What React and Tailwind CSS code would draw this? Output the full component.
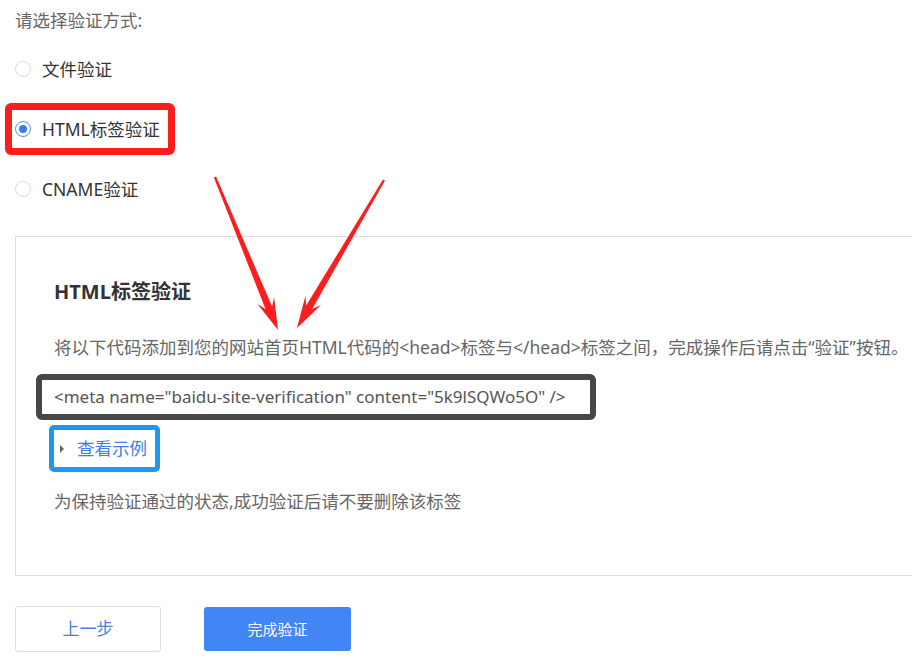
import React from 'react';

const Radio = ({ checked }) => (
  <span
    className={`w-4 h-4 rounded-full border flex items-center justify-center shrink-0 ${
      checked ? 'border-[#5b8ef0]' : 'border-[#dcdcdc]'
    }`}
  >
    {checked && <span className="w-2 h-2 rounded-full bg-[#3d7cf0]" />}
  </span>
);

const Arrows = () => (
  <svg className="absolute inset-0 pointer-events-none" width="912" height="659" viewBox="0 0 912 659">
    <polygon
      fill="#fa1e1e"
      points="213.9,177.5 265.6,309.2 257.5,303.9 278,330 274.1,297 272.1,306.5 216.1,176.5"
    />
    <polygon
      fill="#fa1e1e"
      points="385,180.6 312.2,309.1 321,305 297,328 305.4,295.9 306.2,305.5 383,179.4"
    />
  </svg>
);

const App = () => {
  const options = [
    { label: '文件验证', checked: false },
    { label: 'HTML标签验证', checked: true, marked: true },
    { label: 'CNAME验证', checked: false },
  ];

  return (
    <div className="relative w-[912px] h-[659px] overflow-hidden bg-white font-['Noto_Sans','Noto_Sans_CJK_SC',sans-serif]">
      <div className="pl-[15px]">
        <div className="h-[39px] pt-[2px] flex items-center text-[17.5px] text-[#666]">请选择验证方式:</div>

        {options.map((opt) => (
          <div key={opt.label} className="relative h-[60px] flex items-center gap-[11px]">
            <Radio checked={opt.checked} />
            <span className="text-[17.5px] text-[#333]">{opt.label}</span>
            {opt.marked && (
              <div className="absolute left-[-10px] top-[4px] w-[170px] h-[52px] border-[7px] border-[#fa1e1e] rounded-[6px]" />
            )}
          </div>
        ))}

        <div className="mt-[17px] w-[1000px] h-[340px] border border-[#dedede] pl-[38px] pt-[40px]">
          <h2 className="h-[30px] flex items-center text-[20px] font-bold text-[#333]">HTML标签验证</h2>
          <p className="mt-[25px] h-[30px] flex items-center text-[17.5px] text-[#666] whitespace-nowrap">
            将以下代码添加到您的网站首页HTML代码的&lt;head&gt;标签与&lt;/head&gt;标签之间，完成操作后请点击“验证”按钮。
          </p>
          <div className="mt-[12px] -ml-[18px] w-[560px] h-[46px] border-[6px] border-[#474747] rounded-[6px] pl-[12px] flex items-center text-[17px] text-[#555] whitespace-nowrap">
            &lt;meta name="baidu-site-verification" content="5k9lSQWo5O" /&gt;
          </div>
          <div className="mt-[5px] -ml-[5px] w-[111px] h-[47px] border-[5px] border-[#2196f3] rounded-[5px] flex items-center pl-[6px]">
            <svg width="4" height="8" viewBox="0 0 4 8" className="shrink-0">
              <polygon points="0,0 4,4 0,8" fill="#666" />
            </svg>
            <span className="ml-[13px] text-[17.5px] text-[#3f7fe8]">查看示例</span>
          </div>
          <p className="mt-[14px] h-[30px] flex items-center text-[17.5px] text-[#666]">
            为保持验证通过的状态,成功验证后请不要删除该标签
          </p>
        </div>

        <div className="mt-[30px] flex items-center">
          <button className="w-[146px] h-[46px] border border-[#dedede] rounded-[3px] bg-white text-[17px] text-[#4a7fe0]">
            上一步
          </button>
          <button className="ml-[43px] w-[147px] h-[44px] rounded-[3px] bg-[#4285f4] text-[15px] text-white">
            完成验证
          </button>
        </div>
      </div>
      <Arrows />
    </div>
  );
};

export default App;
